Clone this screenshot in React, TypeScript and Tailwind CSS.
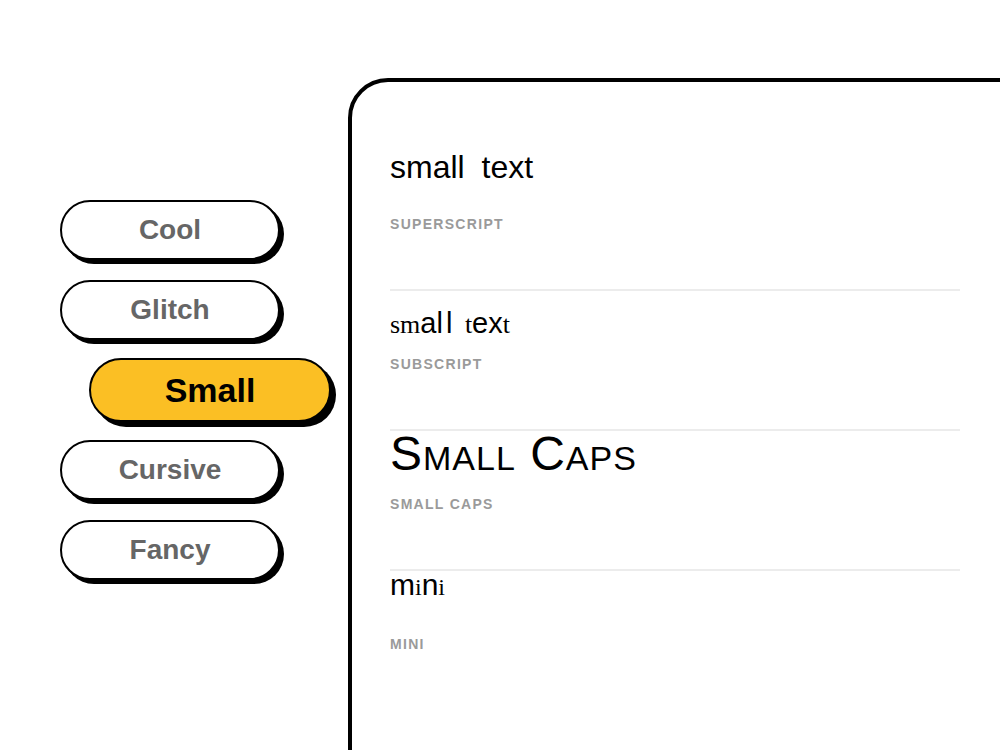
import React from "react";

const SANS = "font-['Liberation_Sans',Arial,sans-serif]";
const SERIF = "font-['Liberation_Serif','Times_New_Roman',serif]";

const buttons = ["Cool", "Glitch", "Small", "Cursive", "Fancy"];

function Label({ children }: { children: React.ReactNode }) {
  return (
    <div className={`${SANS} text-[14px] leading-[20px] font-bold tracking-[1.3px] text-[#9a9a9a]`}>
      {children}
    </div>
  );
}

export default function App() {
  return (
    <div className={`${SANS} flex h-[750px] w-[1000px] overflow-hidden bg-white`}>
      <div className="flex w-[348px] shrink-0 flex-col gap-[20px] pl-[60px] pt-[200px]">
        {buttons.map((b) =>
          b === "Small" ? (
            <div
              key={b}
              className="-my-[2px] ml-[29px] flex h-[64px] w-[242px] items-center justify-center rounded-full border-2 border-black bg-[#fbbf24] text-[34px] font-bold text-black shadow-[5px_5px_0_#000]"
            >
              {b}
            </div>
          ) : (
            <div
              key={b}
              className="flex h-[60px] w-[220px] items-center justify-center rounded-full border-2 border-black bg-white text-[28px] font-bold text-[#666666] shadow-[4px_4px_0_#000]"
            >
              {b}
            </div>
          )
        )}
      </div>
      <div className="mt-[78px] h-[720px] w-[700px] shrink-0 rounded-[40px] border-4 border-black bg-white pl-[38px] pt-[67px]">
        <div className="w-[570px]">
          <div className="h-[140px] pt-[2px]">
            <div className="h-[63px]">
              <div className="text-[32px] leading-[32px] text-black [word-spacing:8px]">small text</div>
            </div>
            <Label>SUPERSCRIPT</Label>
          </div>
          <div className="h-[140px] border-t-2 border-[#ececec]">
            <div className="h-[63px] pt-[20px]">
              <div className={`${SERIF} text-[26px] leading-[24px] text-black whitespace-pre`}>
                <span>sm</span>
                <span className={`${SANS} text-[29px]`}>a</span>
                <span className={`${SANS} text-[29px] tracking-[3px]`}>ll</span>
                <span className="ml-[3px]"> t</span>
                <span className={`${SANS} text-[29px]`}>ex</span>
                <span>t</span>
              </div>
            </div>
            <Label>SUBSCRIPT</Label>
          </div>
          <div className="h-[140px] border-t-2 border-[#ececec]">
            <div className="h-[63px]">
              <div className="text-[48px] leading-[45px] tracking-[1px] text-black [font-variant-caps:small-caps]">
                Small Caps
              </div>
            </div>
            <Label>SMALL CAPS</Label>
          </div>
          <div className="h-[140px] border-t-2 border-[#ececec]">
            <div className="h-[63px]">
              <div className="text-[30px] leading-[27px] text-black">
                <span>m</span>
                <span className={`${SERIF} text-[24px]`}>i</span>
                <span>n</span>
                <span className={`${SERIF} text-[24px]`}>i</span>
              </div>
            </div>
            <Label>MINI</Label>
          </div>
        </div>
      </div>
    </div>
  );
}
